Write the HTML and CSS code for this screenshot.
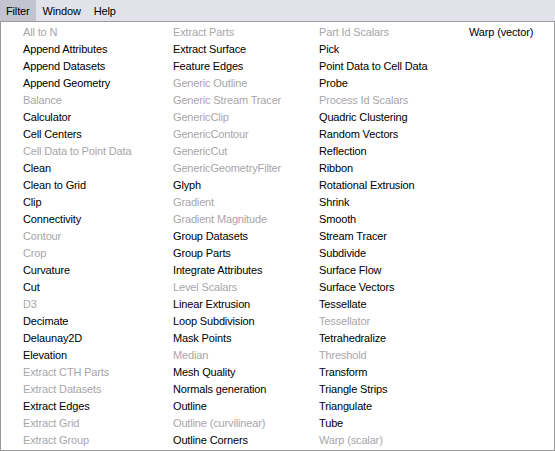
FILE: index.html
```html
<!DOCTYPE html>
<html>
<head>
<meta charset="utf-8">
<link rel="stylesheet" href="styles.css">
</head>
<body>
<div class="menubar">
  <span class="mb-item active">Filter</span>
  <span class="mb-item">Window</span>
  <span class="mb-item">Help</span>
</div>
<div class="menu">
  <div class="item dis">All to N</div>
  <div class="item">Append Attributes</div>
  <div class="item">Append Datasets</div>
  <div class="item">Append Geometry</div>
  <div class="item dis">Balance</div>
  <div class="item">Calculator</div>
  <div class="item">Cell Centers</div>
  <div class="item dis">Cell Data to Point Data</div>
  <div class="item">Clean</div>
  <div class="item">Clean to Grid</div>
  <div class="item">Clip</div>
  <div class="item">Connectivity</div>
  <div class="item dis">Contour</div>
  <div class="item dis">Crop</div>
  <div class="item">Curvature</div>
  <div class="item">Cut</div>
  <div class="item dis">D3</div>
  <div class="item">Decimate</div>
  <div class="item">Delaunay2D</div>
  <div class="item">Elevation</div>
  <div class="item dis">Extract CTH Parts</div>
  <div class="item dis">Extract Datasets</div>
  <div class="item">Extract Edges</div>
  <div class="item dis">Extract Grid</div>
  <div class="item dis">Extract Group</div>

  <div class="item dis">Extract Parts</div>
  <div class="item">Extract Surface</div>
  <div class="item">Feature Edges</div>
  <div class="item dis">Generic Outline</div>
  <div class="item dis">Generic Stream Tracer</div>
  <div class="item dis">GenericClip</div>
  <div class="item dis">GenericContour</div>
  <div class="item dis">GenericCut</div>
  <div class="item dis">GenericGeometryFilter</div>
  <div class="item">Glyph</div>
  <div class="item dis">Gradient</div>
  <div class="item dis">Gradient Magnitude</div>
  <div class="item">Group Datasets</div>
  <div class="item">Group Parts</div>
  <div class="item">Integrate Attributes</div>
  <div class="item dis">Level Scalars</div>
  <div class="item">Linear Extrusion</div>
  <div class="item">Loop Subdivision</div>
  <div class="item">Mask Points</div>
  <div class="item dis">Median</div>
  <div class="item">Mesh Quality</div>
  <div class="item">Normals generation</div>
  <div class="item">Outline</div>
  <div class="item dis">Outline (curvilinear)</div>
  <div class="item">Outline Corners</div>

  <div class="item dis">Part Id Scalars</div>
  <div class="item">Pick</div>
  <div class="item">Point Data to Cell Data</div>
  <div class="item">Probe</div>
  <div class="item dis">Process Id Scalars</div>
  <div class="item">Quadric Clustering</div>
  <div class="item">Random Vectors</div>
  <div class="item">Reflection</div>
  <div class="item">Ribbon</div>
  <div class="item">Rotational Extrusion</div>
  <div class="item">Shrink</div>
  <div class="item">Smooth</div>
  <div class="item">Stream Tracer</div>
  <div class="item">Subdivide</div>
  <div class="item">Surface Flow</div>
  <div class="item">Surface Vectors</div>
  <div class="item">Tessellate</div>
  <div class="item dis">Tessellator</div>
  <div class="item">Tetrahedralize</div>
  <div class="item dis">Threshold</div>
  <div class="item">Transform</div>
  <div class="item">Triangle Strips</div>
  <div class="item">Triangulate</div>
  <div class="item">Tube</div>
  <div class="item dis">Warp (scalar)</div>

  <div class="item">Warp (vector)</div>
</div>
</body>
</html>
```

FILE: styles.css
```css
html, body {
  margin: 0;
  padding: 0;
  background: #ffffff;
}
body {
  font-family: "Liberation Sans", Arial, sans-serif;
  font-size: 11px;
  letter-spacing: -0.15px;
  color: #000000;
  width: 555px;
  height: 451px;
  overflow: hidden;
}
.menubar {
  display: flex;
  gap: 1px;
  height: 21px;
  background: #e1e2ea;
  align-items: stretch;
}
.mb-item {
  display: flex;
  align-items: center;
  padding: 0 6px;
}
.mb-item.active {
  background: #c3c4d0;
}
.menu {
  box-sizing: border-box;
  height: 430px;
  width: 555px;
  border: 1px solid #9a9a9a;
  padding: 2px 0 0 22px;
  display: grid;
  grid-auto-flow: column;
  grid-template-rows: repeat(25, 17px);
  grid-template-columns: 150px 146px 150px auto;
  align-content: start;
}
.item {
  line-height: 17px;
  white-space: nowrap;
}
.item.dis {
  color: #a7a6aa;
}
```
